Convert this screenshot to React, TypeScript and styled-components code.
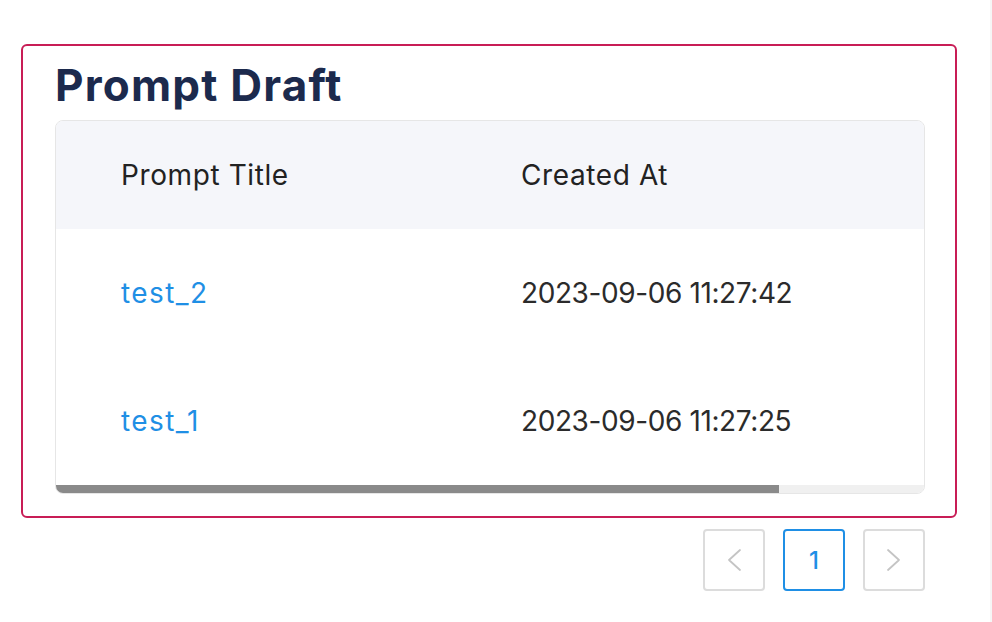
import { FC } from 'react';
import styled, { createGlobalStyle } from 'styled-components';

const GlobalStyle = createGlobalStyle`
    body {
        margin: 0;
        background: #ffffff;
        font-family: Inter, 'Noto Sans', sans-serif;
    }
`;

const drafts = [
    { title: 'test_2', createdAt: '2023-09-06 11:27:42' },
    { title: 'test_1', createdAt: '2023-09-06 11:27:25' },
];

// visible part of the table vs its full width
const VIEW_WIDTH = 869;
const TABLE_WIDTH = 1043;

export default function App() {
    const thumbPct = (VIEW_WIDTH / TABLE_WIDTH) * 100;
    return (
        <>
            <GlobalStyle />
            <Page>
                <Main>
                    <DraftPanel>
                        <Heading>Prompt Draft</Heading>
                        <TableCard>
                            <Scroller>
                                <Table>
                                    <thead>
                                        <tr>
                                            <HeadCell $width={400}>Prompt Title</HeadCell>
                                            <HeadCell $width={400}>Created At</HeadCell>
                                            <HeadCell />
                                        </tr>
                                    </thead>
                                    <tbody>
                                        {drafts.map((d) => (
                                            <tr key={d.title}>
                                                <Cell>
                                                    <TitleLink href='#'>{d.title}</TitleLink>
                                                </Cell>
                                                <Cell>{d.createdAt}</Cell>
                                                <Cell />
                                            </tr>
                                        ))}
                                    </tbody>
                                </Table>
                            </Scroller>
                            <ScrollTrack>
                                <ScrollThumb style={{ width: `${thumbPct}%` }} />
                            </ScrollTrack>
                        </TableCard>
                    </DraftPanel>
                    <Pager />
                </Main>
                <SideStrip />
            </Page>
        </>
    );
}

const Pager: FC = () => (
    <PagerRow>
        <PageButton disabled aria-label='previous'>
            <Chevron dir='left' />
        </PageButton>
        <PageButton $active>1</PageButton>
        <PageButton disabled aria-label='next'>
            <Chevron dir='right' />
        </PageButton>
    </PagerRow>
);

const Chevron: FC<{ dir: 'left' | 'right' }> = ({ dir }) => (
    <svg width='16' height='24' viewBox='0 0 16 24' fill='none'>
        <path
            d={dir === 'left' ? 'M14 2 L3 12 L14 22' : 'M2 2 L13 12 L2 22'}
            stroke='#c4c4c4'
            strokeWidth='1.8'
            strokeLinecap='round'
            strokeLinejoin='round'
        />
    </svg>
);

const Page = styled.div`
    display: flex;
    min-height: 622px;
`;

const Main = styled.div`
    flex: 1;
    min-width: 0;
    padding: 44px 33px 0 21px;
`;

const SideStrip = styled.div`
    width: 2px;
    background: #f6f6f6;
`;

const DraftPanel = styled.section`
    border: 2px solid #c81d56;
    border-radius: 6px;
    padding: 10px 30px 22px 32px;
`;

const Heading = styled.h2`
    margin: 0 0 5px;
    font-size: 44px;
    line-height: 59px;
    font-weight: 700;
    color: #1c2a4d;
    letter-spacing: 1.2px;
`;

const TableCard = styled.div`
    border: 1px solid #e6e6e6;
    border-radius: 8px;
    overflow: hidden;
`;

const Scroller = styled.div`
    overflow-x: auto;
    scrollbar-width: none;
`;

const ScrollTrack = styled.div`
    height: 8px;
    background: #f0f0f0;
`;

const ScrollThumb = styled.div`
    height: 100%;
    background: #8a8a8a;
`;

const Table = styled.table`
    width: ${TABLE_WIDTH}px;
    border-collapse: collapse;
    table-layout: fixed;
`;

const HeadCell = styled.th<{ $width?: number }>`
    box-sizing: border-box;
    width: ${(p) => (p.$width ? `${p.$width}px` : 'auto')};
    height: 108px;
    padding: 0 0 0 65px;
    background: #f5f6fa;
    text-align: left;
    font-size: 28px;
    font-weight: 400;
    letter-spacing: 0.6px;
    color: #222222;
`;

const Cell = styled.td`
    box-sizing: border-box;
    height: 128px;
    padding: 0 0 0 65px;
    font-size: 28px;
    letter-spacing: -0.4px;
    color: #2b2b2b;
`;

const TitleLink = styled.a`
    color: #1f8fe5;
    text-decoration: none;
    letter-spacing: 1.4px;
`;

const PagerRow = styled.div`
    display: flex;
    justify-content: flex-end;
    gap: 18px;
    padding: 11px 0 0 0;
    margin-right: 32px;
`;

const PageButton = styled.button<{ $active?: boolean }>`
    width: 62px;
    height: 62px;
    display: flex;
    align-items: center;
    justify-content: center;
    background: #ffffff;
    border: 2px solid ${(p) => (p.$active ? '#1f8fe5' : '#dcdcdc')};
    border-radius: 4px;
    color: #1f8fe5;
    font-family: Inter, sans-serif;
    font-size: 24px;
    font-weight: 500;
    padding: 0;
`;
